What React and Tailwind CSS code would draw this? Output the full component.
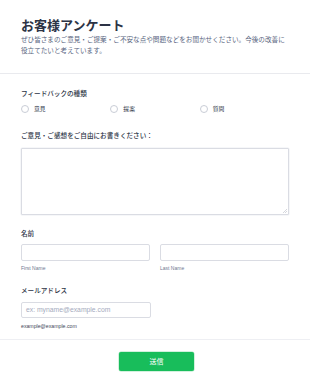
const cjk = { fontFamily: '"Inter", "Noto Sans CJK JP", sans-serif' };
const latin = { fontFamily: '"Liberation Sans", "Noto Sans CJK JP", sans-serif' };

function Radio({ label }) {
    return (
        <label className="flex items-center gap-[5px]">
            <span className="block w-[8px] h-[8px] rounded-full border border-[#c9cdd6] bg-white"></span>
            <span className="text-[5.8px] leading-[8px] text-[#2c3345]">{label}</span>
        </label>
    );
}

export default function App() {
    return (
        <div className="w-[310px] h-[387px] bg-white overflow-hidden" style={cjk}>
            <div className="px-[21px] pt-[17px] pb-[16px] border-b border-[#e9eaee]">
                <h1 className="text-[13px] leading-[16px] font-bold text-[#2c3345]">お客様アンケート</h1>
                <p className="mt-[2px] text-[6.6px] leading-[11px] text-[#57647e] whitespace-nowrap">
                    ぜひ皆さまのご意見・ご提案・ご不安な点や問題などをお聞かせください。今後の改善に<br />
                    役立てたいと考えています。
                </p>
            </div>

            <div className="px-[21px] pt-[15px] pb-[8.5px] border-b border-[#eeeff3]">
                <div className="text-[6.6px] leading-[11px] font-medium text-[#2c3345]">フィードバックの種類</div>
                <div className="mt-[3px] h-[12px] grid grid-cols-3 items-center">
                    <Radio label="意見" />
                    <Radio label="提案" />
                    <Radio label="質問" />
                </div>

                <div className="mt-[16px] text-[6.6px] leading-[11px] font-medium text-[#2c3345]">ご意見・ご感想をご自由にお書きください：</div>
                <div className="mt-[6px] relative h-[67px] border border-[#dadce3] rounded-[1px] bg-white shadow-[0_0_0_0.5px_#eef0f3]">
                    <svg className="absolute right-[1px] bottom-[1px]" width="4" height="4" viewBox="0 0 4 4">
                        <path d="M4 0L0 4M4 2L2 4" stroke="#b9bcc6" strokeWidth="0.6" />
                    </svg>
                </div>

                <div className="mt-[14px] text-[6.6px] leading-[11px] font-medium text-[#2c3345]">名前</div>
                <div className="mt-[4px] grid grid-cols-2 gap-[10px]">
                    <div>
                        <div className="h-[17px] border border-[#dadce3] rounded-[2px] bg-white"></div>
                        <div className="mt-[3px] text-[5px] leading-[8px] text-[#6f7891]" style={latin}>First Name</div>
                    </div>
                    <div>
                        <div className="h-[17px] border border-[#dadce3] rounded-[2px] bg-white"></div>
                        <div className="mt-[3px] text-[5px] leading-[8px] text-[#6f7891]" style={latin}>Last Name</div>
                    </div>
                </div>

                <div className="mt-[13.5px] text-[6.6px] leading-[11px] font-medium text-[#2c3345]">メールアドレス</div>
                <div className="mt-[5px] w-[130px] h-[16.5px] border border-[#dadce3] rounded-[2px] bg-white flex items-center px-[4px]">
                    <span className="text-[6.8px] leading-[8px] text-[#a5abbe]" style={latin}>ex: myname@example.com</span>
                </div>
                <div className="mt-[4px] text-[5.2px] leading-[8px] text-[#3f4759]" style={latin}>example@example.com</div>
            </div>

            <div className="flex justify-center pt-[12.5px]">
                <button className="w-[75px] h-[19px] ml-[3px] rounded-[2px] bg-[#18bd5b] text-white text-[7px] leading-[19px] shadow-[0_0_0_0.5px_#a6e3bd]">送信</button>
            </div>
        </div>
    );
}
